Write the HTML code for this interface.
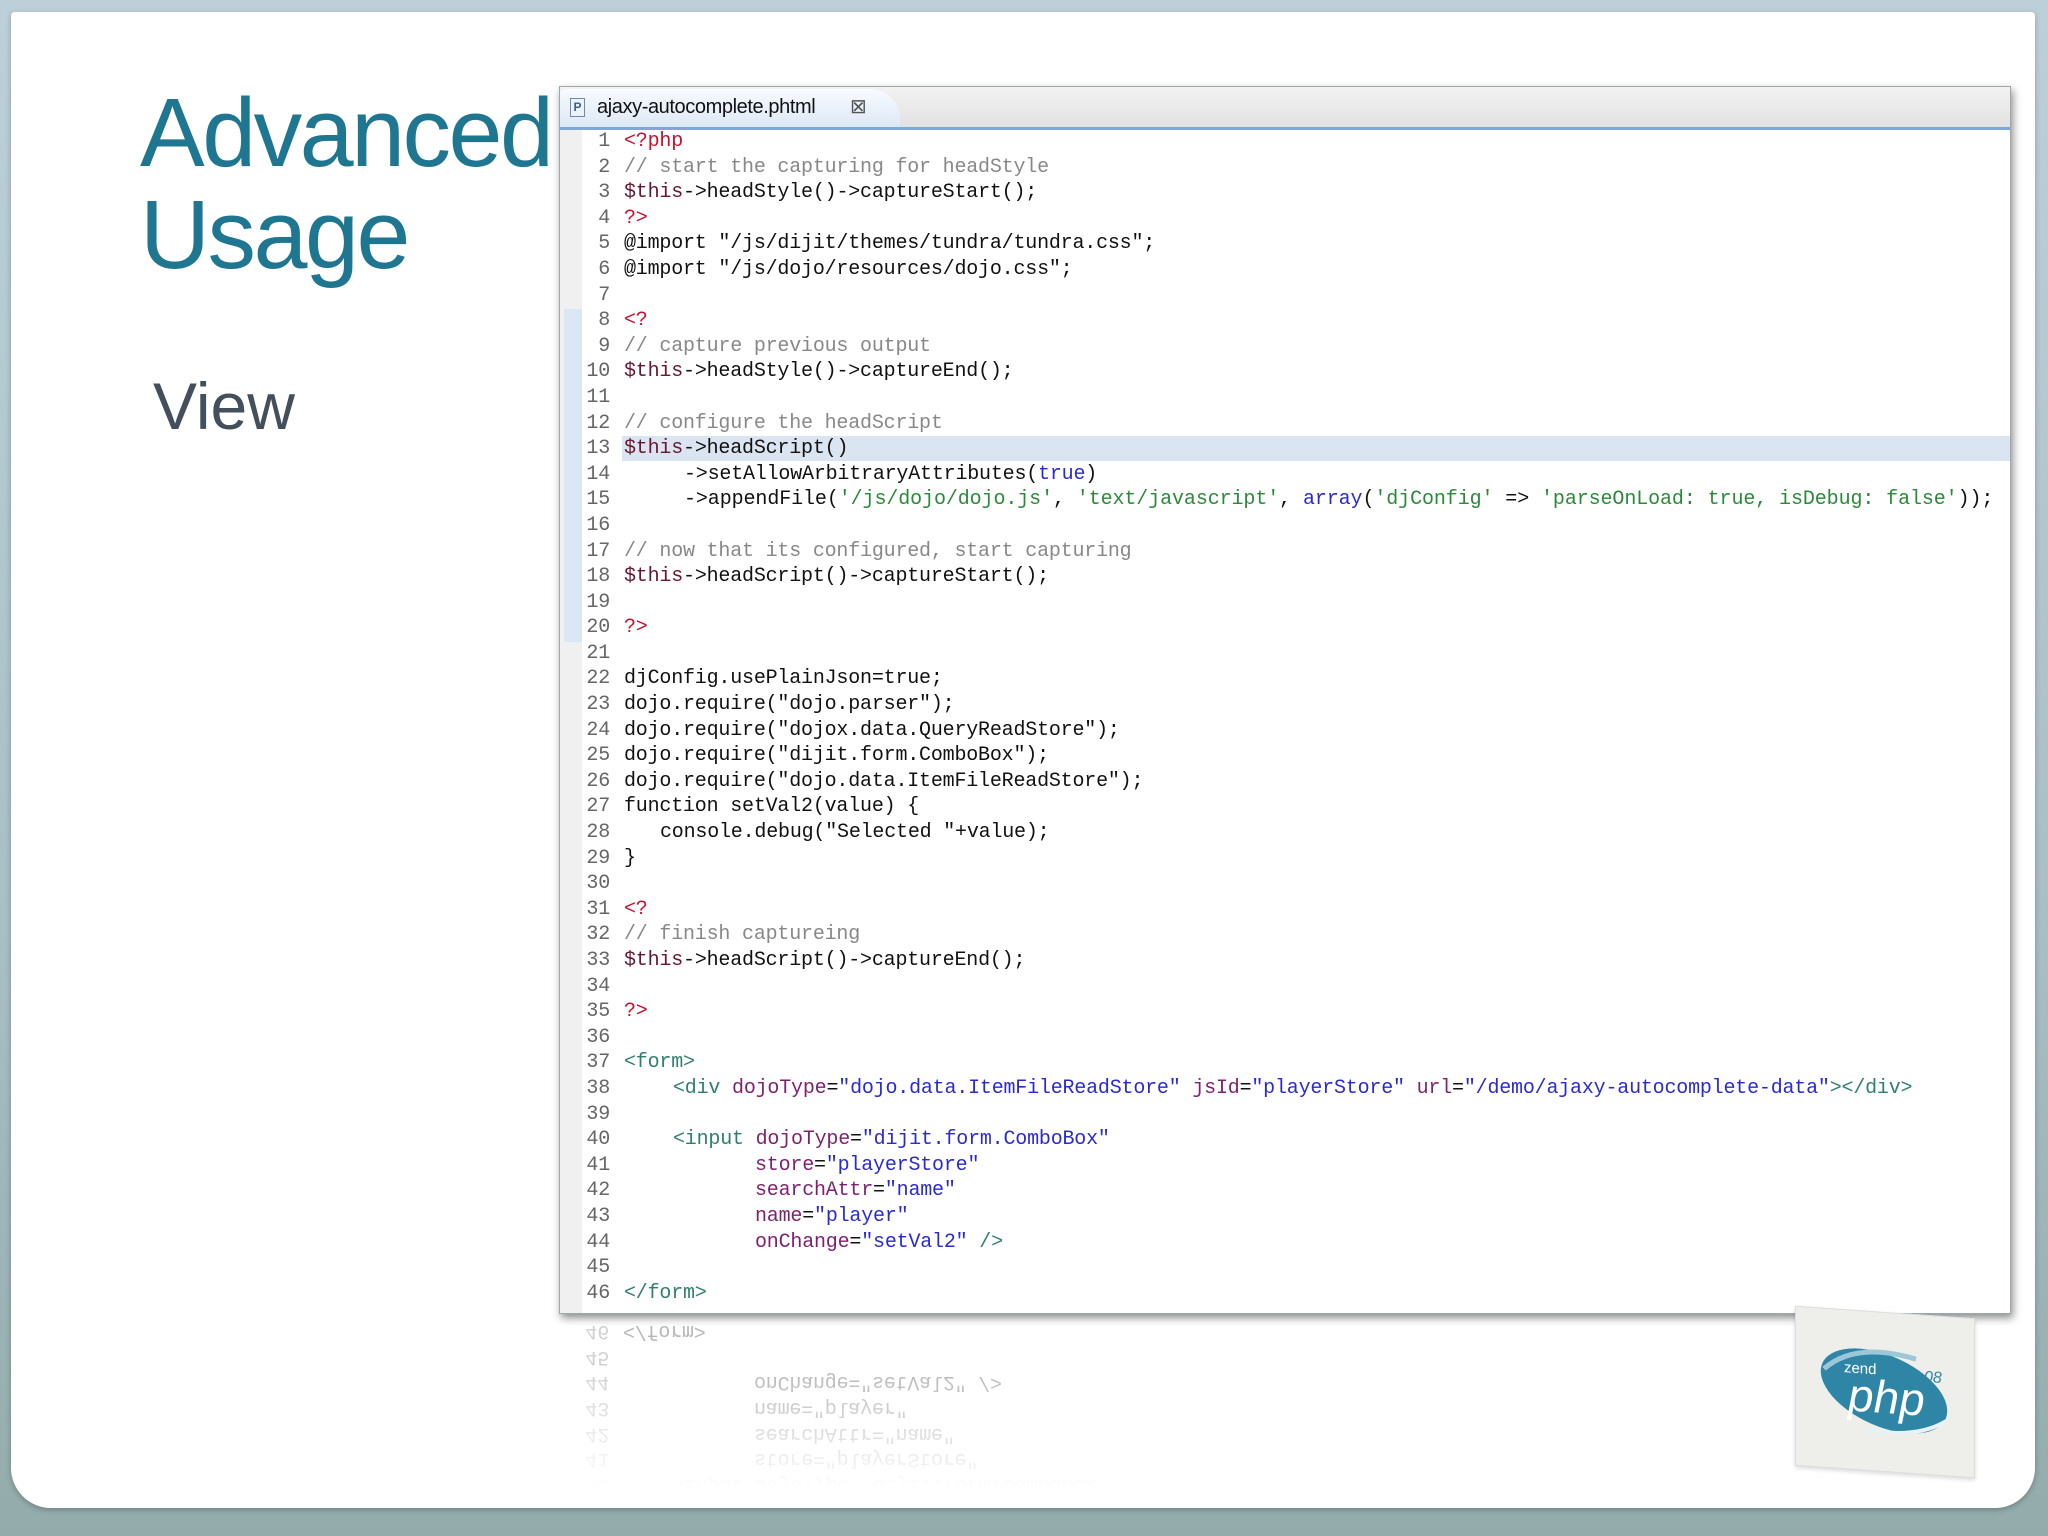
<!DOCTYPE html>
<html><head><meta charset="utf-8"><style>
html,body{margin:0;padding:0}
body{width:2048px;height:1536px;background:linear-gradient(#bdd0da,#a9bfc4 60%,#93acab);position:relative;overflow:hidden;font-family:"Liberation Sans",sans-serif}
.card{position:absolute;left:11px;top:12px;width:2024px;height:1496px;background:#fff;border-radius:4px 4px 40px 40px;box-shadow:0 2px 6px rgba(0,0,0,.25)}
.t{position:absolute;color:#1e7690;font-size:97px;letter-spacing:-2.5px;line-height:1}
.view{position:absolute;left:153px;top:368px;font-size:66px;color:#434f5a;letter-spacing:0px}
.win{position:absolute;left:559px;top:86px;width:1450px;height:1226px;background:#fff;border:1px solid #9aa;box-shadow:2px 4px 8px rgba(0,0,0,.45)}
.tabbar{position:absolute;left:0;top:0;right:0;height:40px;background:linear-gradient(#f2f2f2,#e2e2e2);border-bottom:3px solid #7fa7d8}
.tab{position:absolute;left:0;top:2px;width:340px;height:38px;background:linear-gradient(#f8fbff,#dde8f6);border-radius:6px 30px 0 0}
.tab .ic{position:absolute;left:10px;top:9px;width:13px;height:17px;border:1px solid #6a8ab0;background:#eef3fa;font-size:12px;color:#3a5f90;text-align:center;line-height:17px;font-weight:bold}
.tab .nm{position:absolute;left:37px;top:7px;font-size:20px;color:#111;letter-spacing:-0.4px}
.tab .x{position:absolute;left:290px;top:5px;font-size:20px;color:#555}
.gut{position:absolute;left:0;top:43px;width:22px;bottom:0;background:#f0f0f0}
.gsel{position:absolute;left:4px;top:222px;width:18px;height:333px;background:#dce7f5}
.hl{position:absolute;left:62px;right:0;top:349px;height:25px;background:#dbe5f1}
.code{position:absolute;left:0;top:42px;font-family:"Liberation Mono",monospace;font-size:20px;line-height:25.6px;letter-spacing:-0.2px;color:#111}
.l{height:25.6px;white-space:pre;position:relative}
.n{position:absolute;left:0;width:50px;text-align:right;color:#666}
.c{position:absolute;left:64px}
.r{color:#c8102e}.g{color:#888}.v{color:#6a1630}.b{color:#2a2ad0}.s{color:#2a8a3a}
.tg{color:#2f7f6f}.a{color:#7f1f6f}.q{color:#2a2acf}
.refl{position:absolute;left:559px;top:1318px;width:1450px;height:170px;overflow:hidden;opacity:.3;transform:scaleY(-1)}
.refl .code{top:auto;bottom:-26px}
.fade{position:absolute;left:559px;top:1318px;width:1450px;height:170px;background:linear-gradient(rgba(255,255,255,0) 30%,#fff)}
.logo{position:absolute;left:1795px;top:1312px;width:178px;height:158px;background:#eeeeea;border:1px solid #ddd;transform:skewY(4deg);box-shadow:0 2px 4px rgba(0,0,0,.15)}
</style></head><body>
<div class="card"></div>
<div class="t" style="left:140px;top:84px">Advanced</div>
<div class="t" style="left:140px;top:186px">Usage</div>
<div class="view">View</div>

<div class="win">
<div class="tabbar"><div class="tab"><div class="ic">P</div><div class="nm">ajaxy-autocomplete.phtml</div><div class="x">⊠</div></div></div>
<div class="gut"></div><div class="gsel"></div>
<div class="hl"></div>
<div class="code">
<div class="l"><span class="n">1</span><span class="c r">&lt;?php</span></div>
<div class="l"><span class="n">2</span><span class="c g">// start the capturing for headStyle</span></div>
<div class="l"><span class="n">3</span><span class="c"><span class="v">$this</span>-&gt;headStyle()-&gt;captureStart();</span></div>
<div class="l"><span class="n">4</span><span class="c r">?&gt;</span></div>
<div class="l"><span class="n">5</span><span class="c">@import "/js/dijit/themes/tundra/tundra.css";</span></div>
<div class="l"><span class="n">6</span><span class="c">@import "/js/dojo/resources/dojo.css";</span></div>
<div class="l"><span class="n">7</span></div>
<div class="l"><span class="n">8</span><span class="c r">&lt;?</span></div>
<div class="l"><span class="n">9</span><span class="c g">// capture previous output</span></div>
<div class="l"><span class="n">10</span><span class="c"><span class="v">$this</span>-&gt;headStyle()-&gt;captureEnd();</span></div>
<div class="l"><span class="n">11</span></div>
<div class="l"><span class="n">12</span><span class="c g">// configure the headScript</span></div>
<div class="l"><span class="n">13</span><span class="c"><span class="v">$this</span>-&gt;headScript()</span></div>
<div class="l"><span class="n">14</span><span class="c" style="left:124px">-&gt;setAllowArbitraryAttributes(<span class="b">true</span>)</span></div>
<div class="l"><span class="n">15</span><span class="c" style="left:124px;letter-spacing:-0.1px">-&gt;appendFile(<span class="s">'/js/dojo/dojo.js'</span>, <span class="s">'text/javascript'</span>, <span class="b">array</span>(<span class="s">'djConfig'</span> =&gt; <span class="s">'parseOnLoad: true, isDebug: false'</span>));</span></div>
<div class="l"><span class="n">16</span></div>
<div class="l"><span class="n">17</span><span class="c g">// now that its configured, start capturing</span></div>
<div class="l"><span class="n">18</span><span class="c"><span class="v">$this</span>-&gt;headScript()-&gt;captureStart();</span></div>
<div class="l"><span class="n">19</span></div>
<div class="l"><span class="n">20</span><span class="c r">?&gt;</span></div>
<div class="l"><span class="n">21</span></div>
<div class="l"><span class="n">22</span><span class="c">djConfig.usePlainJson=true;</span></div>
<div class="l"><span class="n">23</span><span class="c">dojo.require("dojo.parser");</span></div>
<div class="l"><span class="n">24</span><span class="c">dojo.require("dojox.data.QueryReadStore");</span></div>
<div class="l"><span class="n">25</span><span class="c">dojo.require("dijit.form.ComboBox");</span></div>
<div class="l"><span class="n">26</span><span class="c">dojo.require("dojo.data.ItemFileReadStore");</span></div>
<div class="l"><span class="n">27</span><span class="c">function setVal2(value) {</span></div>
<div class="l"><span class="n">28</span><span class="c" style="left:100px">console.debug("Selected "+value);</span></div>
<div class="l"><span class="n">29</span><span class="c">}</span></div>
<div class="l"><span class="n">30</span></div>
<div class="l"><span class="n">31</span><span class="c r">&lt;?</span></div>
<div class="l"><span class="n">32</span><span class="c g">// finish captureing</span></div>
<div class="l"><span class="n">33</span><span class="c"><span class="v">$this</span>-&gt;headScript()-&gt;captureEnd();</span></div>
<div class="l"><span class="n">34</span></div>
<div class="l"><span class="n">35</span><span class="c r">?&gt;</span></div>
<div class="l"><span class="n">36</span></div>
<div class="l"><span class="n">37</span><span class="c tg">&lt;form&gt;</span></div>
<div class="l"><span class="n">38</span><span class="c" style="left:113px"><span class="tg">&lt;div</span> <span class="a">dojoType</span>=<span class="q">"dojo.data.ItemFileReadStore"</span> <span class="a">jsId</span>=<span class="q">"playerStore"</span> <span class="a">url</span>=<span class="q">"/demo/ajaxy-autocomplete-data"</span><span class="tg">&gt;&lt;/div&gt;</span></span></div>
<div class="l"><span class="n">39</span></div>
<div class="l"><span class="n">40</span><span class="c" style="left:113px"><span class="tg">&lt;input</span> <span class="a">dojoType</span>=<span class="q">"dijit.form.ComboBox"</span></span></div>
<div class="l"><span class="n">41</span><span class="c" style="left:195px"><span class="a">store</span>=<span class="q">"playerStore"</span></span></div>
<div class="l"><span class="n">42</span><span class="c" style="left:195px"><span class="a">searchAttr</span>=<span class="q">"name"</span></span></div>
<div class="l"><span class="n">43</span><span class="c" style="left:195px"><span class="a">name</span>=<span class="q">"player"</span></span></div>
<div class="l"><span class="n">44</span><span class="c" style="left:195px"><span class="a">onChange</span>=<span class="q">"setVal2"</span> <span class="tg">/&gt;</span></span></div>
<div class="l"><span class="n">45</span></div>
<div class="l"><span class="n">46</span><span class="c tg">&lt;/form&gt;</span></div>
</div>
</div>

<div class="refl"><div class="code">
<div class="l"><span class="n">40</span><span class="c" style="left:113px">&lt;input dojoType="dijit.form.ComboBox"</span></div>
<div class="l"><span class="n">41</span><span class="c" style="left:195px">store="playerStore"</span></div>
<div class="l"><span class="n">42</span><span class="c" style="left:195px">searchAttr="name"</span></div>
<div class="l"><span class="n">43</span><span class="c" style="left:195px">name="player"</span></div>
<div class="l"><span class="n">44</span><span class="c" style="left:195px">onChange="setVal2" /&gt;</span></div>
<div class="l"><span class="n">45</span></div>
<div class="l"><span class="n">46</span><span class="c">&lt;/form&gt;</span></div>
<div class="l"></div>
</div></div>
<div class="fade"></div>

<div class="logo">
<svg width="178" height="158" viewBox="0 0 178 158">
<ellipse cx="88" cy="78" rx="66" ry="36" transform="rotate(20 88 78)" fill="#2f85a5"/>
<path d="M28 60 Q60 30 120 44" stroke="#9cc7d8" stroke-width="5" fill="none"/>
<path d="M70 118 Q120 124 150 104" stroke="#e8f2f5" stroke-width="4" fill="none"/>
<text x="48" y="62" font-family="Liberation Sans" font-size="15" fill="#fff">zend</text>
<text x="52" y="100" font-family="Liberation Sans" font-style="italic" font-size="46" fill="#fff">php</text>
<text x="128" y="66" font-family="Liberation Sans" font-style="italic" font-size="16" fill="#2f85a5">08</text>
</svg></div>
</body></html>
